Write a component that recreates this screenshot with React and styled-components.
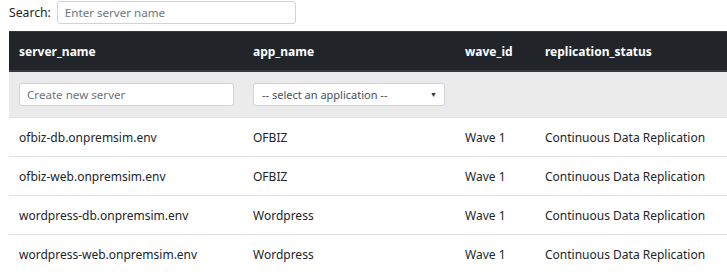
import React from 'react'
import styled, { createGlobalStyle } from 'styled-components'

const GlobalStyle = createGlobalStyle`
    html, body {
        margin: 0;
        padding: 0;
        background: #fff;
    }
    body {
        font-family: "Noto Sans", "Open Sans", sans-serif;
        font-size: 12px;
        color: #212529;
    }
`

const Page = styled.div`
    padding: 1px 0 0 9px;
`

const SearchBar = styled.div`
    display: flex;
    align-items: center;
    gap: 6px;
    height: 23px;
    margin-bottom: 7px;
`

const Label = styled.label`
    font-size: 12.2px;
    color: #212529;
`

const TextInput = styled.input`
    box-sizing: border-box;
    width: ${props => props.width}px;
    height: 23px;
    padding: 0 7px;
    border: 1px solid #ced4da;
    border-radius: 3px;
    font-family: inherit;
    font-size: 11.6px;
    color: #495057;
    background: #fff;
    outline: none;
    &::placeholder {
        color: #6c757d;
    }
`

const SelectBox = styled.div`
    box-sizing: border-box;
    display: flex;
    align-items: center;
    justify-content: space-between;
    width: 192px;
    height: 23px;
    padding: 0 7px 0 8px;
    border: 1px solid #ced4da;
    border-radius: 3px;
    background: #fff;
    font-size: 11px;
    color: #495057;
`

const Caret = styled.span`
    font-size: 7px;
    color: #333;
`

const Table = styled.table`
    width: 718px;
    border-collapse: collapse;
    table-layout: fixed;
`

const HeadCell = styled.th`
    height: 38px;
    padding: 0 10px;
    text-align: left;
    font-weight: 700;
    color: #fff;
    background: #212529;
    border-top: 1px solid #32383e;
    border-bottom: 2px solid #32383e;
`

const NewRow = styled.tr`
    background: #ebebeb;
`

const NewCell = styled.td`
    height: 45px;
    padding: 0 10px;
    vertical-align: middle;
`

const Cell = styled.td`
    height: 38px;
    padding: 0 10px;
    border-top: 1px solid #dee2e6;
    vertical-align: middle;
    white-space: nowrap;
`

const servers = [
    { name: 'ofbiz-db.onpremsim.env', app: 'OFBIZ' },
    { name: 'ofbiz-web.onpremsim.env', app: 'OFBIZ' },
    { name: 'wordpress-db.onpremsim.env', app: 'Wordpress' },
    { name: 'wordpress-web.onpremsim.env', app: 'Wordpress' }
]

export default function App() {
    return (
        <Page>
            <GlobalStyle />
            <SearchBar>
                <Label>Search:</Label>
                <TextInput width={239} placeholder="Enter server name" />
            </SearchBar>
            <Table>
                <colgroup>
                    <col style={{ width: 234 }} />
                    <col style={{ width: 212 }} />
                    <col style={{ width: 80 }} />
                    <col />
                </colgroup>
                <thead>
                    <tr>
                        <HeadCell>server_name</HeadCell>
                        <HeadCell>app_name</HeadCell>
                        <HeadCell>wave_id</HeadCell>
                        <HeadCell>replication_status</HeadCell>
                    </tr>
                </thead>
                <tbody>
                    <NewRow>
                        <NewCell>
                            <TextInput width={215} placeholder="Create new server" />
                        </NewCell>
                        <NewCell>
                            <SelectBox>
                                <span>-- select an application --</span>
                                <Caret>▼</Caret>
                            </SelectBox>
                        </NewCell>
                        <NewCell />
                        <NewCell />
                    </NewRow>
                    {servers.map(s => (
                        <tr key={s.name}>
                            <Cell>{s.name}</Cell>
                            <Cell>{s.app}</Cell>
                            <Cell>Wave 1</Cell>
                            <Cell>Continuous Data Replication</Cell>
                        </tr>
                    ))}
                </tbody>
            </Table>
        </Page>
    )
}
